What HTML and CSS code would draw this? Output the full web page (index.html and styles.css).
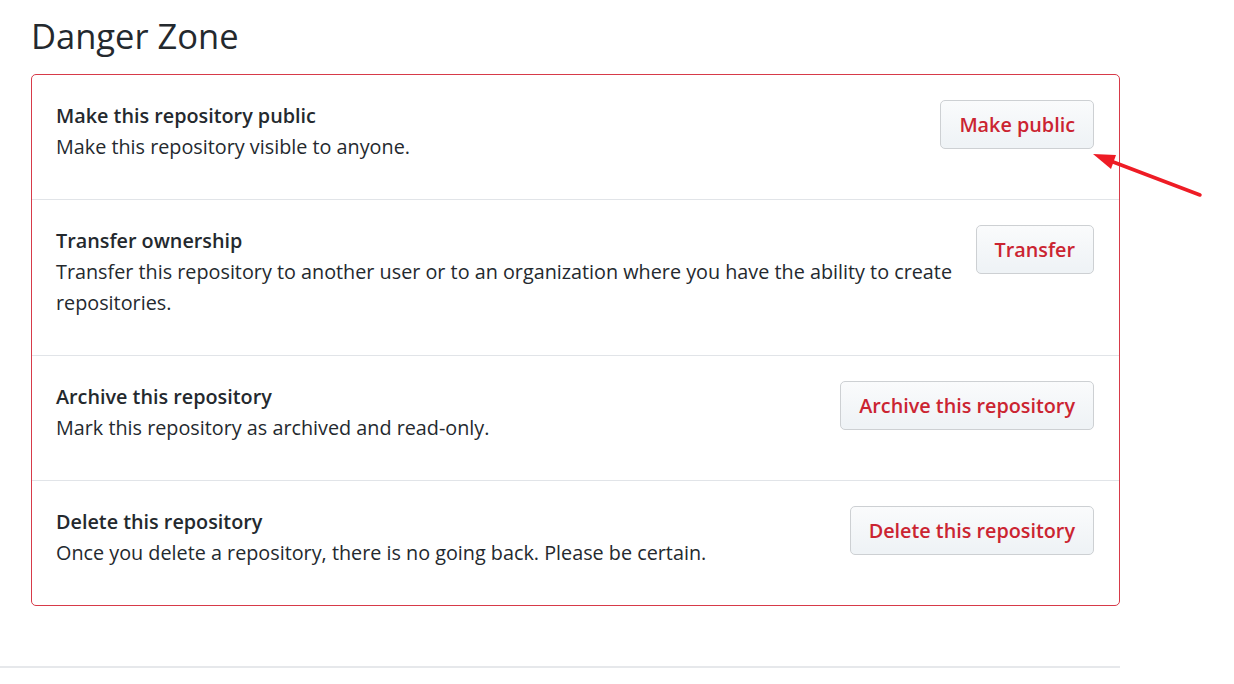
FILE: index.html
```html
<!DOCTYPE html>
<html lang="en">
<head>
<meta charset="utf-8">
<title>Danger Zone</title>
<link rel="stylesheet" href="styles.css">
</head>
<body>
<div class="page">
  <h2 class="heading">Danger Zone</h2>
  <ul class="danger-box">
    <li class="row">
      <div class="row-text">
        <strong class="row-title">Make this repository public</strong>
        <p class="row-desc">Make this repository visible to anyone.</p>
      </div>
      <button class="btn-danger" type="button">Make public</button>
    </li>
    <li class="row">
      <div class="row-text">
        <strong class="row-title">Transfer ownership</strong>
        <p class="row-desc">Transfer this repository to another user or to an organization where you have the ability to create repositories.</p>
      </div>
      <button class="btn-danger" type="button">Transfer</button>
    </li>
    <li class="row">
      <div class="row-text">
        <strong class="row-title">Archive this repository</strong>
        <p class="row-desc">Mark this repository as archived and read-only.</p>
      </div>
      <button class="btn-danger" type="button">Archive this repository</button>
    </li>
    <li class="row">
      <div class="row-text">
        <strong class="row-title">Delete this repository</strong>
        <p class="row-desc">Once you delete a repository, there is no going back. Please be certain.</p>
      </div>
      <button class="btn-danger" type="button">Delete this repository</button>
    </li>
  </ul>
  <div class="bottom-rule"></div>
</div>
<svg class="annotation" width="1234" height="684" viewBox="0 0 1234 684" aria-hidden="true">
  <line x1="1200" y1="195" x2="1108" y2="160" stroke="#ee1c25" stroke-width="3.5" stroke-linecap="round"/>
  <polygon points="1093,154 1116,155 1111,169" fill="#ee1c25"/>
</svg>
</body>
</html>
```
FILE: styles.css
```css
html, body {
  margin: 0;
  padding: 0;
  background: #ffffff;
}

body {
  font-family: "Open Sans", "Noto Sans", sans-serif;
  color: #24292e;
  position: relative;
  width: 1234px;
  height: 684px;
  overflow: hidden;
}

.page {
  padding-top: 14px;
}

.heading {
  margin: 0 0 16px 31px;
  font-size: 34.5px;
  line-height: 44px;
  font-weight: 400;
  color: #24292e;
}

.danger-box {
  list-style: none;
  margin: 0 0 0 31px;
  padding: 0;
  width: 1089px;
  box-sizing: border-box;
  border: 1px solid #d73a49;
  border-radius: 5px;
}

.row {
  display: flex;
  align-items: flex-start;
  gap: 20px;
  padding: 25px 25px 24px 24px;
  border-top: 1px solid #e1e4e8;
}

.row:first-child {
  border-top: none;
}

.row-text {
  flex: 1;
  font-size: 19.8px;
  line-height: 31px;
}

.row-title {
  display: block;
  font-weight: 600;
}

.row-desc {
  margin: 0 0 13px 0;
}

.btn-danger {
  flex: none;
  font-family: inherit;
  font-size: 19.8px;
  line-height: 31px;
  font-weight: 600;
  color: #cb2431;
  padding: 8px 18px;
  border: 1px solid #cdd0d3;
  border-radius: 5px;
  background: linear-gradient(#fafbfc, #eff3f6 90%);
  cursor: pointer;
}

.bottom-rule {
  margin-top: 60px;
  width: 1120px;
  height: 2px;
  background: #e6e8eb;
}

.annotation {
  position: absolute;
  left: 0;
  top: 0;
  pointer-events: none;
}
```
